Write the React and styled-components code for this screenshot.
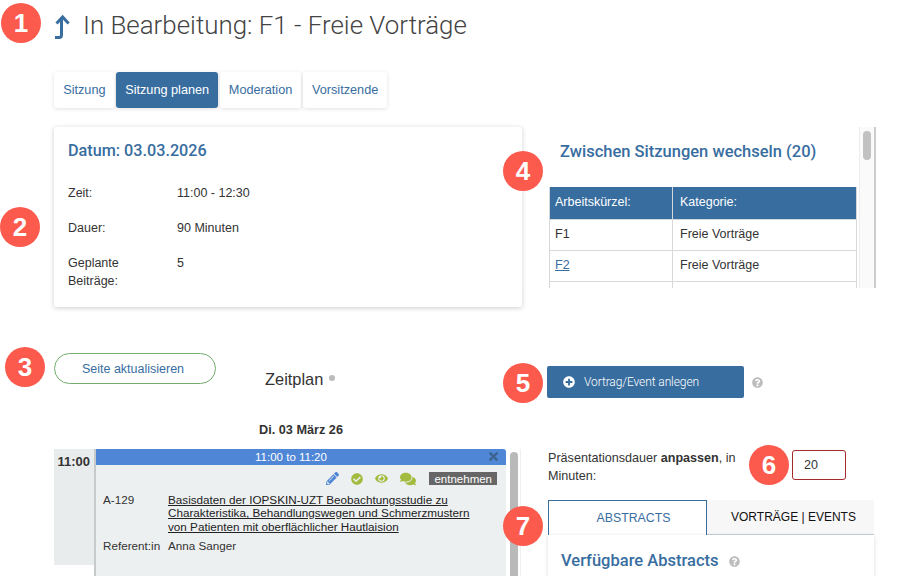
import React from "react";
import styled, { createGlobalStyle } from "styled-components";
import {
  FaPencilAlt,
  FaCheckCircle,
  FaEye,
  FaComments,
  FaPlusCircle,
  FaQuestionCircle,
  FaTimes,
} from "react-icons/fa";

const BLUE = "#386d9f";
const HEADING_FONT = `Roboto, "Liberation Sans", sans-serif`;

const Global = createGlobalStyle`
  html, body { margin: 0; padding: 0; background: #fff; }
  body { font-family: "Liberation Sans", Arial, sans-serif; color: #333; }
  * { box-sizing: border-box; }
`;

const Page = styled.div`
  position: relative;
  width: 903px;
  height: 576px;
  overflow: hidden;
  background: #fff;
  padding-left: 54px;
`;

const Badge = styled.div`
  position: absolute;
  left: ${(p) => p.$x - 20}px;
  top: ${(p) => p.$y - 20}px;
  width: 40px;
  height: 40px;
  border-radius: 50%;
  background: #fb5a4d;
  color: #fff;
  font-size: 26px;
  font-weight: 700;
  display: flex;
  align-items: center;
  justify-content: center;
  z-index: 5;
`;

const Header = styled.div`
  display: flex;
  align-items: center;
  height: 52px;
`;

const UpArrow = styled.svg`
  width: 18px;
  height: 26px;
  margin-right: 11px;
  margin-top: 1px;
`;

const Title = styled.h1`
  margin: -3px 0 0;
  font-family: ${HEADING_FONT};
  font-weight: 300;
  font-size: 25.9px;
  color: #444;
  white-space: nowrap;
`;

const Tabs = styled.div`
  display: flex;
  gap: 1.3px;
  margin-top: 20px;
  height: 36px;
`;

const Tab = styled.div`
  display: flex;
  align-items: center;
  padding: 0 9.2px;
  font-size: 12.7px;
  border-radius: 3px;
  color: ${(p) => (p.$active ? "#fff" : BLUE)};
  background: ${(p) => (p.$active ? BLUE : "#fff")};
  box-shadow: 0 1px 4px rgba(0, 0, 0, 0.12);
`;

const TopGrid = styled.div`
  display: grid;
  grid-template-columns: 468px 354px;
  margin-top: 19px;
`;

const InfoCard = styled.section`
  height: 180px;
  padding: 14px 14px;
  border-radius: 2px;
  background: #fff;
  box-shadow: 0 1px 5px rgba(0, 0, 0, 0.2);
`;

const CardTitle = styled.h2`
  margin: 0 0 23.5px;
  font-family: ${HEADING_FONT};
  font-size: 16.2px;
  line-height: 19px;
  font-weight: 500;
  color: ${BLUE};
`;

const InfoRow = styled.div`
  display: grid;
  grid-template-columns: 109px 1fr;
  margin-bottom: 17.2px;
  font-size: 12.5px;
  line-height: 18px;
  color: #333;
`;

const SwitchPanel = styled.section`
  position: relative;
  height: 161px;
  overflow: hidden;
  border-left: 1px solid #eee;
  padding: 15px 0 0 26px;
`;

const SwitchTitle = styled.h2`
  margin: 0 0 26px 11px;
  font-family: ${HEADING_FONT};
  font-size: 16.5px;
  line-height: 19px;
  font-weight: 500;
  color: ${BLUE};
  white-space: nowrap;
`;

const ScrollTrack = styled.div`
  position: absolute;
  top: 0;
  right: 0;
  bottom: 0;
  width: 17px;
  background: #fafafa;
  border-left: 1px solid #ececec;
  border-right: 2px solid #ccc;
`;

const ScrollThumb = styled.div`
  width: 8px;
  height: 29px;
  margin: 4px 0 0 3px;
  border-radius: 4px;
  background: #c2c2c2;
`;

const SessionTable = styled.table`
  width: 308px;
  border-collapse: collapse;
  table-layout: fixed;
  font-size: 12.5px;
`;

const Th = styled.th`
  height: 32px;
  padding: 0 5px 1px ${(p) => (p.$second ? 7 : 5)}px;
  background: ${BLUE};
  color: #fff;
  font-weight: 400;
  text-align: left;
  border: 1px solid #d4d8dc;
  border-top: 0;
`;

const Td = styled.td`
  height: 31px;
  padding: 0 5px 2px ${(p) => (p.$second ? 7 : 5)}px;
  border: 1px solid #d8d8d8;
  color: #333;
`;

const TableLink = styled.a`
  color: ${BLUE};
  text-decoration: underline;
`;

const LowerGrid = styled.div`
  display: grid;
  grid-template-columns: 493px 327px;
  margin-top: 46px;
`;

const LeftColumn = styled.div`
  display: flex;
  flex-direction: column;
`;

const PlanBar = styled.div`
  display: flex;
  align-items: flex-start;
  height: 69px;
`;

const RefreshButton = styled.div`
  width: 162px;
  height: 31px;
  padding-right: 4px;
  border: 1px solid #72ad6e;
  border-radius: 16px;
  display: flex;
  align-items: center;
  justify-content: center;
  font-size: 12.5px;
  color: ${BLUE};
`;

const PlanTitle = styled.div`
  display: flex;
  align-items: center;
  gap: 6px;
  margin: 17px 0 0 49px;
  font-size: 16.4px;
  line-height: 19px;
  color: #333;
`;

const SmallDot = styled.span`
  width: 6px;
  height: 6px;
  border-radius: 50%;
  background: #bbb;
  margin-top: -3px;
`;

const DayLabel = styled.div`
  width: 494px;
  height: 27px;
  text-align: center;
  font-size: 12.7px;
  font-weight: 700;
  line-height: 16px;
  color: #333;
`;

const Calendar = styled.div`
  display: grid;
  grid-template-columns: 42px 410px 12px 3px;
  width: 467px;
  height: 127px;
  overflow: hidden;
`;

const TimeCell = styled.div`
  height: 116px;
  padding: 5px 6px 0 0;
  text-align: right;
  background: #e9eced;
  font-size: 13px;
  font-weight: 700;
  color: #333;
`;

const EventCard = styled.article`
  border-left: 2px solid #c6cacb;
  background: #edf0f1;
  height: 127px;
  margin-left: -2px;
  width: 412px;
`;

const EventHead = styled.div`
  position: relative;
  height: 16px;
  padding-right: 20px;
  text-align: center;
  font-size: 11.5px;
  line-height: 16px;
  color: #fff;
  background: #4f86d6;
  border-top-right-radius: 3px;
`;

const CloseIcon = styled(FaTimes)`
  position: absolute;
  right: 7px;
  top: 1px;
  width: 11px;
  height: 13px;
  color: #3c648f;
`;

const EventTools = styled.div`
  display: flex;
  align-items: center;
  justify-content: flex-end;
  height: 27.5px;
  padding-right: 9px;
`;

const ToolIcon = styled.span`
  display: flex;
  margin-right: ${(p) => p.$gap || 12}px;
  color: ${(p) => p.$color};
  font-size: ${(p) => p.$size || 11}px;
`;

const TakeOut = styled.span`
  height: 13px;
  padding: 0 5px;
  background: #666;
  color: #fff;
  font-size: 11.5px;
  line-height: 14px;
`;

const EventRow = styled.div`
  display: grid;
  grid-template-columns: 65px 1fr;
  padding-left: 7px;
  margin-bottom: 6px;
  font-size: 11.7px;
  line-height: 13.5px;
  color: #333;
`;

const EventLink = styled.span`
  text-decoration: underline;
  color: #222;
  white-space: nowrap;
`;

const CalendarScroll = styled.div`
  margin: 3px 0 0 4px;
  width: 8px;
  height: 130px;
  border-radius: 4px;
  background: #b9b9b9;
`;

const CalendarEdge = styled.div`
  margin-left: 2px;
  border-left: 1px solid #efefef;
`;

const RightColumn = styled.div`
  display: flex;
  flex-direction: column;
`;

const CreateRow = styled.div`
  display: flex;
  align-items: center;
  gap: 8px;
  margin-top: 13px;
`;

const CreateButton = styled.div`
  display: flex;
  align-items: center;
  gap: 9px;
  width: 197px;
  height: 32px;
  padding-left: 16px;
  border-radius: 2px;
  background: ${BLUE};
  color: #fff;
  font-family: ${HEADING_FONT};
  font-weight: 300;
  font-size: 12px;
  letter-spacing: -0.1px;
`;

const HelpIcon = styled(FaQuestionCircle)`
  color: #bdbdbd;
  font-size: ${(p) => p.$size || 11}px;
`;

const DurationRow = styled.div`
  display: flex;
  justify-content: space-between;
  align-items: flex-start;
  width: 298px;
  margin: 52px 0 0 1px;
  height: 50px;
  font-size: 12.6px;
  line-height: 18px;
`;

const DurationText = styled.div`
  width: 205px;
  margin-top: -1px;
  color: #333;
`;

const DurationInput = styled.div`
  width: 54px;
  height: 30px;
  padding-left: 11px;
  border: 1px solid #a52a2a;
  border-radius: 3px;
  font-size: 12.5px;
  line-height: 28px;
  color: #333;
`;

const PanelTabs = styled.div`
  display: flex;
  height: 35px;
  margin-left: 1px;
  background: #f7f7f7;
  border-bottom: 1px solid #c9d0d6;
`;

const PanelTab = styled.div`
  width: ${(p) => p.$w}px;
  height: ${(p) => (p.$active ? 35 : 34)}px;
  display: flex;
  align-items: center;
  justify-content: center;
  padding-left: ${(p) => (p.$active ? 12 : 8)}px;
  font-size: ${(p) => (p.$active ? 12.3 : 12)}px;
  color: ${(p) => (p.$active ? BLUE : "#111")};
  background: ${(p) => (p.$active ? "#fff" : "transparent")};
  border: ${(p) => (p.$active ? `1px solid ${BLUE}` : "0")};
  border-bottom: 0;
`;

const PanelBody = styled.div`
  height: 60px;
  margin-left: 1px;
  padding: 17px 13px;
  box-shadow: 0 1px 4px rgba(0, 0, 0, 0.15);
`;

const PanelTitle = styled.h3`
  display: flex;
  align-items: center;
  gap: 11px;
  margin: 0;
  font-family: ${HEADING_FONT};
  font-size: 16.5px;
  line-height: 18px;
  font-weight: 500;
  color: ${BLUE};
`;

export default function App() {
  return (
    <Page>
      <Global />
      <Badge $x={21} $y={23}>1</Badge>
      <Badge $x={20} $y={227}>2</Badge>
      <Badge $x={25} $y={367}>3</Badge>
      <Badge $x={523} $y={171}>4</Badge>
      <Badge $x={523} $y={383}>5</Badge>
      <Badge $x={769} $y={465}>6</Badge>
      <Badge $x={523} $y={526}>7</Badge>

      <Header>
        <UpArrow viewBox="0 0 18 26">
          <path
            d="M1 23.5h4.2c1.6 0 2.3-.9 2.3-2.4V5M2.5 9.5 8.6 3l6 6.5"
            fill="none"
            stroke={BLUE}
            strokeWidth="3"
          />
        </UpArrow>
        <Title>In Bearbeitung: F1 - Freie Vorträge</Title>
      </Header>

      <Tabs>
        <Tab>Sitzung</Tab>
        <Tab $active>Sitzung planen</Tab>
        <Tab>Moderation</Tab>
        <Tab>Vorsitzende</Tab>
      </Tabs>

      <TopGrid>
        <InfoCard>
          <CardTitle>Datum: 03.03.2026</CardTitle>
          <InfoRow>
            <span>Zeit:</span>
            <span>11:00 - 12:30</span>
          </InfoRow>
          <InfoRow>
            <span>Dauer:</span>
            <span>90 Minuten</span>
          </InfoRow>
          <InfoRow>
            <span>
              Geplante
              <br />
              Beiträge:
            </span>
            <span>5</span>
          </InfoRow>
        </InfoCard>

        <SwitchPanel>
          <SwitchTitle>Zwischen Sitzungen wechseln (20)</SwitchTitle>
          <SessionTable>
            <colgroup>
              <col width="123" />
              <col />
            </colgroup>
            <thead>
              <tr>
                <Th>Arbeitskürzel:</Th>
                <Th $second>Kategorie:</Th>
              </tr>
            </thead>
            <tbody>
              <tr>
                <Td>F1</Td>
                <Td $second>Freie Vorträge</Td>
              </tr>
              <tr>
                <Td>
                  <TableLink>F2</TableLink>
                </Td>
                <Td $second>Freie Vorträge</Td>
              </tr>
              <tr>
                <Td />
                <Td />
              </tr>
            </tbody>
          </SessionTable>
          <ScrollTrack>
            <ScrollThumb />
          </ScrollTrack>
        </SwitchPanel>
      </TopGrid>

      <LowerGrid>
        <LeftColumn>
          <PlanBar>
            <RefreshButton>Seite aktualisieren</RefreshButton>
            <PlanTitle>
              Zeitplan
              <SmallDot />
            </PlanTitle>
          </PlanBar>
          <DayLabel>Di. 03 März 26</DayLabel>
          <Calendar>
            <TimeCell>11:00</TimeCell>
            <EventCard>
              <EventHead>
                11:00 to 11:20
                <CloseIcon />
              </EventHead>
              <EventTools>
                <ToolIcon $color="#4f86d6" $size={13}>
                  <FaPencilAlt />
                </ToolIcon>
                <ToolIcon $color="#a3bb3f" $size={12}>
                  <FaCheckCircle />
                </ToolIcon>
                <ToolIcon $color="#a3bb3f" $size={13}>
                  <FaEye />
                </ToolIcon>
                <ToolIcon $color="#a3bb3f" $size={16} $gap={13}>
                  <FaComments />
                </ToolIcon>
                <TakeOut>entnehmen</TakeOut>
              </EventTools>
              <EventRow>
                <span>A-129</span>
                <EventLink>
                  Basisdaten der IOPSKIN-UZT Beobachtungsstudie zu
                  <br />
                  Charakteristika, Behandlungswegen und Schmerzmustern
                  <br />
                  von Patienten mit oberflächlicher Hautlaision
                </EventLink>
              </EventRow>
              <EventRow>
                <span>Referent:in</span>
                <span>Anna Sanger</span>
              </EventRow>
            </EventCard>
            <CalendarScroll />
            <CalendarEdge />
          </Calendar>
        </LeftColumn>

        <RightColumn>
          <CreateRow>
            <CreateButton>
              <FaPlusCircle size={12} />
              Vortrag/Event anlegen
            </CreateButton>
            <HelpIcon $size={11} />
          </CreateRow>
          <DurationRow>
            <DurationText>
              Präsentationsdauer <b>anpassen</b>, in Minuten:
            </DurationText>
            <DurationInput>20</DurationInput>
          </DurationRow>
          <PanelTabs>
            <PanelTab $active $w={159}>ABSTRACTS</PanelTab>
            <PanelTab $w={165}>VORTRÄGE | EVENTS</PanelTab>
          </PanelTabs>
          <PanelBody>
            <PanelTitle>
              Verfügbare Abstracts
              <HelpIcon $size={11} />
            </PanelTitle>
          </PanelBody>
        </RightColumn>
      </LowerGrid>
    </Page>
  );
}
